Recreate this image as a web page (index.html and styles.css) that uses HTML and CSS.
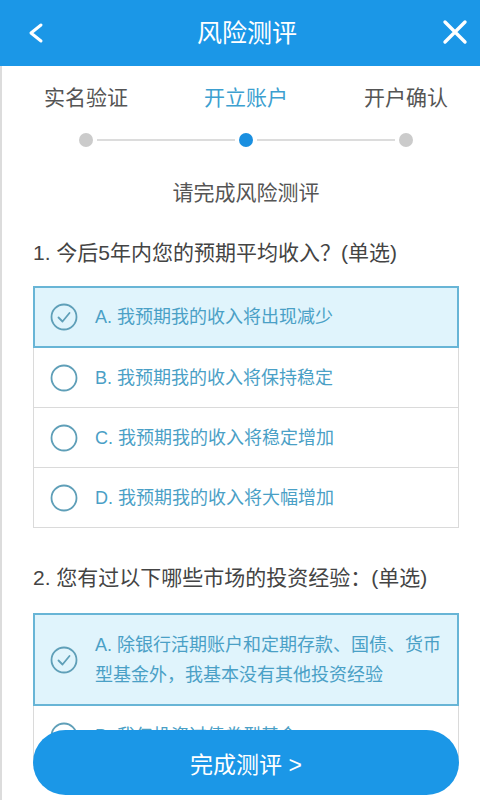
FILE: index.html
```html
<!DOCTYPE html>
<html lang="zh-CN">
<head>
  <meta charset="UTF-8" />
  <title>风险测评</title>
  <link rel="stylesheet" href="styles.css">
</head>
<body>

<div class="top-bar">
  <span class="nav-btn back">
    <svg width="20" height="22" viewBox="0 0 20 22"><path d="M15 3 L5 11 L15 19" fill="none" stroke="#fff" stroke-width="3" stroke-linecap="round" stroke-linejoin="round"/></svg>
  </span>
  <h1 class="title">风险测评</h1>
  <span class="nav-btn close">
    <svg width="26" height="26" viewBox="0 0 26 26"><path d="M3 3 L23 23 M23 3 L3 23" fill="none" stroke="#fff" stroke-width="3.4" stroke-linecap="round"/></svg>
  </span>
</div>

<div class="page">
  <div class="steps">
    <div class="step">实名验证</div>
    <div class="step active">开立账户</div>
    <div class="step">开户确认</div>
  </div>
  <div class="track">
    <span class="dot"></span>
    <span class="seg"></span>
    <span class="dot on"></span>
    <span class="seg"></span>
    <span class="dot"></span>
  </div>

  <div class="intro">请完成风险测评</div>

  <div class="question">1. 今后5年内您的预期平均收入？(单选)</div>
  <div class="options">
    <div class="option selected">
      <span class="radio"><svg viewBox="0 0 28 28"><circle cx="14" cy="14" r="12.5"/><path d="M8.5 14.5 L12.5 18.5 L19.5 10"/></svg></span>
      <span class="label">A. 我预期我的收入将出现减少</span>
    </div>
    <div class="option">
      <span class="radio"><svg viewBox="0 0 28 28"><circle cx="14" cy="14" r="12.5"/></svg></span>
      <span class="label">B. 我预期我的收入将保持稳定</span>
    </div>
    <div class="option">
      <span class="radio"><svg viewBox="0 0 28 28"><circle cx="14" cy="14" r="12.5"/></svg></span>
      <span class="label">C. 我预期我的收入将稳定增加</span>
    </div>
    <div class="option">
      <span class="radio"><svg viewBox="0 0 28 28"><circle cx="14" cy="14" r="12.5"/></svg></span>
      <span class="label">D. 我预期我的收入将大幅增加</span>
    </div>
  </div>

  <div class="question q2">2. 您有过以下哪些市场的投资经验：(单选)</div>
  <div class="options tight">
    <div class="option selected tall">
      <span class="radio"><svg viewBox="0 0 28 28"><circle cx="14" cy="14" r="12.5"/><path d="M8.5 14.5 L12.5 18.5 L19.5 10"/></svg></span>
      <span class="label">A. 除银行活期账户和定期存款、国债、货币型基金外，我基本没有其他投资经验</span>
    </div>
    <div class="option">
      <span class="radio"><svg viewBox="0 0 28 28"><circle cx="14" cy="14" r="12.5"/></svg></span>
      <span class="label">B. 我仅投资过债券型基金</span>
    </div>
  </div>
</div>

<button class="submit-btn">完成测评 &gt;</button>

</body>
</html>
```

FILE: styles.css
```css
body {
  font-family: "Liberation Sans", "Noto Sans CJK SC", sans-serif;
  margin: 0;
  background: #fff;
  height: 800px;
  overflow: hidden;
}
.top-bar {
  display: flex;
  align-items: center;
  justify-content: space-between;
  height: 66px;
  background: #1b97e7;
  padding: 0 12px 0 26px;
}
.title {
  margin: 0;
  font-size: 25px;
  font-weight: normal;
  color: #fff;
  line-height: 66px;
}
.nav-btn {
  display: flex;
  align-items: center;
}
.back {
  width: 30px;
}
.close {
  width: 30px;
  justify-content: flex-end;
  margin-top: -2px;
}
.page {
  border-left: 2px solid #dcdcdc;
  height: 716px;
  padding-top: 18px;
}
.steps {
  display: grid;
  grid-template-columns: 160px 160px 160px;
  padding-left: 4px;
}
.step {
  text-align: center;
  font-size: 21px;
  line-height: 28px;
  color: #555;
}
.step.active {
  color: #3d9fd0;
}
.track {
  display: flex;
  align-items: center;
  width: 334px;
  margin: 21px 0 0 77px;
  height: 14px;
}
.dot {
  width: 14px;
  height: 14px;
  border-radius: 50%;
  background: #cbcbcb;
}
.dot.on {
  background: #1a8fe0;
}
.seg {
  flex: 1;
  height: 2px;
  background: #dcdcdc;
  margin: 0 4px;
}
.intro {
  text-align: center;
  font-size: 21px;
  line-height: 28px;
  color: #555;
  margin: 32px 0 0 10px;
}
.question {
  font-size: 21px;
  line-height: 28px;
  color: #444;
  margin: 32px 0 0 31px;
}
.question.q2 {
  margin-top: 36px;
}
.options {
  margin: 20px 21px 0 31px;
}
.options.tight {
  margin-top: 22px;
}
.option {
  display: flex;
  align-items: center;
  height: 59px;
  border: 1px solid #dadada;
  margin-top: -1px;
  padding-left: 16px;
  background: #fff;
}
.option.selected {
  position: relative;
  border: 2px solid #68b5d6;
  background: #e0f4fc;
  padding-left: 15px;
  height: 58px;
}
.option.tall {
  height: 89px;
}
.radio {
  width: 28px;
  height: 28px;
  flex-shrink: 0;
}
.radio svg {
  width: 28px;
  height: 28px;
  display: block;
}
.radio circle,
.radio path {
  fill: none;
  stroke: #5f9fb8;
  stroke-width: 1.8;
  stroke-linecap: round;
  stroke-linejoin: round;
}
.label {
  margin-left: 17px;
  font-size: 18px;
  line-height: 30px;
  color: #4aa0c6;
  padding-right: 8px;
}
.submit-btn {
  position: fixed;
  left: 33px;
  right: 21px;
  bottom: 5px;
  height: 65px;
  border: none;
  border-radius: 33px;
  background: #1b97e7;
  color: #fff;
  font-family: "Liberation Sans", "Noto Sans CJK SC", sans-serif;
  font-size: 23px;
  cursor: pointer;
}
```
